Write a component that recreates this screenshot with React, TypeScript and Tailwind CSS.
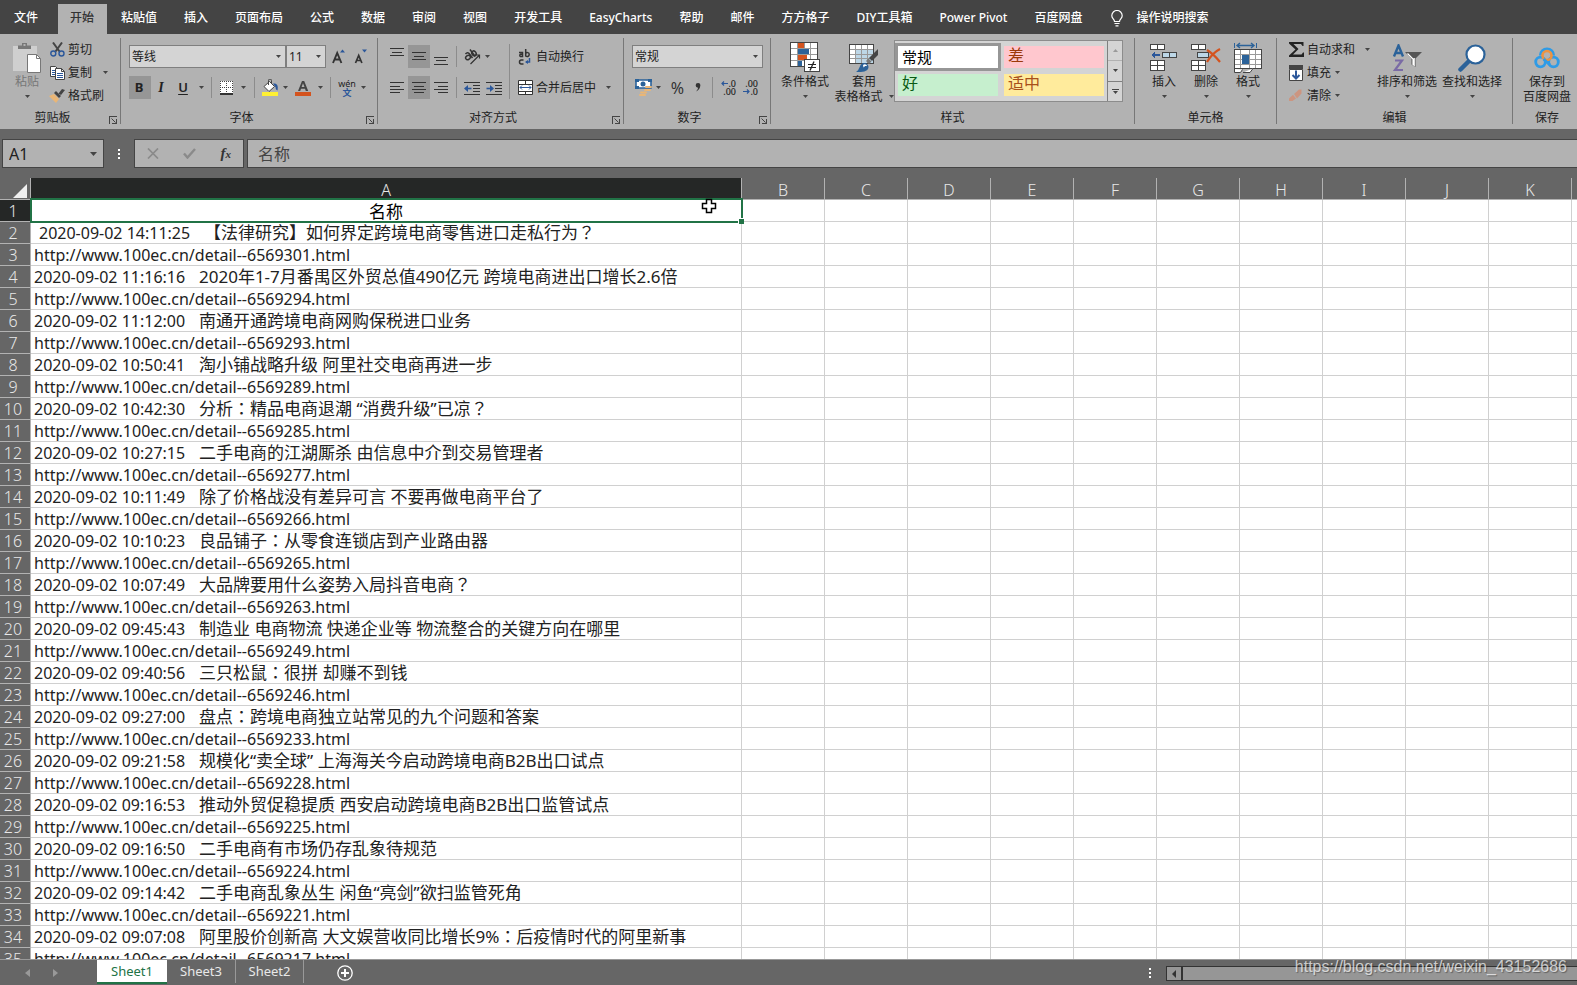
import React from "react";

const Caret = ({ className = "" }: { className?: string }) => (
  <svg width="5" height="3" viewBox="0 0 5 3" className={"shrink-0 " + className} aria-hidden="true">
    <path d="M0 0h5L2.5 3z" fill="#444" />
  </svg>
);

const Launcher = ({ label }: { label: string }) => (
  <button aria-label={label} className="mr-[3px] flex w-3 items-end justify-end">
    <svg width="8" height="8" viewBox="0 0 8 8" fill="none" stroke="#444" shapeRendering="crispEdges">
      <path d="M.5 8V.5H8" />
      <path d="M2.5 2.5l4 4" shapeRendering="auto" />
      <path d="M7.5 3v4.500H3" />
    </svg>
  </button>
);

type GroupProps = { title: string; width: string; launcher?: boolean; last?: boolean; children: React.ReactNode };

const Group = ({ title, width, launcher, last, children }: GroupProps) => (
  <section aria-label={title} className={"flex h-[86px] shrink-0 flex-col " + width + (last ? "" : " border-r border-[#777]")}>
    <div className="flex h-[72px]">{children}</div>
    <div className="flex h-[14px]">
      <div className="flex-1 text-center leading-[16px]">{title}</div>
      {launcher && <Launcher label={title + "设置"} />}
    </div>
  </section>
);

const Sep = ({ className = "" }: { className?: string }) => <span className={"h-[21px] w-px shrink-0 bg-[#8c8c8c] " + className} />;

const DropSlot = ({ label, className = "" }: { label: string; className?: string }) => (
  <button aria-label={label} className={"flex h-[23px] w-3 shrink-0 items-center justify-center " + className}>
    <Caret />
  </button>
);

const Combo = ({ label, value, width }: { label: string; value: string; width: string }) => (
  <label className={"flex h-[23px] shrink-0 items-center border border-[#7f7f7f] bg-[#d4d4d4] pr-1 pl-0.5 " + width}>
    <select aria-label={label} defaultValue={value} className="min-w-0 flex-1 appearance-none bg-transparent text-[12px] outline-none">
      <option>{value}</option>
    </select>
    <Caret />
  </label>
);

const Square = ({ label, active, children }: { label: string; active?: boolean; children: React.ReactNode }) => (
  <button aria-label={label} className={"flex h-[23px] w-[22px] shrink-0 items-center justify-center " + (active ? "bg-[#969696]" : "")}>
    {children}
  </button>
);

const SmallButton = ({ icon, text, caret }: { icon: React.ReactNode; text: string; caret?: string }) => (
  <button className="flex h-[23px] items-center whitespace-nowrap">
    <span className="mr-[3px] flex w-4 justify-center">{icon}</span>
    {text}
    {caret && <Caret className={caret} />}
  </button>
);

type BigProps = { icon: React.ReactNode; lines: string[]; width: string; inlineCaret?: boolean; muted?: boolean; noCaret?: boolean };

const BigButton = ({ icon, lines, width, inlineCaret, muted, noCaret }: BigProps) => (
  <button className={"flex shrink-0 flex-col items-center pt-[3px] " + width + (muted ? " text-[#777]" : "")}>
    <span className="flex h-[33px] items-center justify-center">{icon}</span>
    <span className="h-[15px] leading-[16px] whitespace-nowrap">{lines[0]}</span>
    <span className="flex h-[15px] items-center leading-[16px] whitespace-nowrap">
      {lines[1]}
      {!noCaret && <Caret className={inlineCaret ? "ml-[6px]" : ""} />}
    </span>
  </button>
);

/* ---------- icons ---------- */

const PasteIcon = () => (
  <svg width="30" height="32" viewBox="0 0 30 32">
    <path d="M1 4h24v25H1z" fill="#cfcfcf" />
    <path d="M6 7V3.500h4V1h5v2.500h4V7z" fill="#777" />
    <rect x="11.500" y="2" width="2" height="2" fill="#b2b2b2" />
    <path d="M15.500 12.500h9l4 4v14h-13z" fill="#fff" stroke="#777" />
    <path d="M24.500 12.500v4h4" fill="none" stroke="#777" />
  </svg>
);

const CutIcon = () => (
  <svg width="15" height="15" viewBox="0 0 15 15" fill="none">
    <path d="M3 .5l6.500 9M12 .5l-6.500 9" stroke="#444" strokeWidth="2" />
    <circle cx="3.300" cy="11.500" r="2.500" stroke="#2b579a" strokeWidth="1.400" />
    <circle cx="11.500" cy="11.500" r="2.500" stroke="#2b579a" strokeWidth="1.400" />
  </svg>
);

const CopyIcon = () => (
  <svg width="15" height="14" viewBox="0 0 15 14">
    <path d="M.5.5h5l2 2v8h-7z" fill="#fff" stroke="#444" />
    <path d="M2 4.500h3M2 6.500h3M2 8.500h3" stroke="#2b579a" />
    <path d="M5.500 2.500h6l3 3v8h-9z" fill="#fff" stroke="#444" />
    <path d="M11.500 2.500v3h3" fill="none" stroke="#444" />
    <path d="M7 7.500h6M7 9.500h6M7 11.500h6" stroke="#2b579a" />
  </svg>
);

const PainterIcon = () => (
  <svg width="16" height="14" viewBox="0 0 16 14">
    <path d="M0 7l5-2 5 5-3 4z" fill="#eab676" />
    <path d="M5 4l2-2 5 5-2 2z" fill="#444" />
    <path d="M9.500 4.500L13 0l3 1-4 5z" fill="#444" />
  </svg>
);

const BordersIcon = () => (
  <svg width="13" height="14" viewBox="0 0 13 14" shapeRendering="crispEdges">
    <path d="M0 0h13v13H0z" fill="#fff" />
    <path d="M0 .5h13M0 6.500h13M.5 0v13M6.500 0v13M12.500 0v13" stroke="#444" strokeDasharray="1 1" />
    <path d="M0 13h13" stroke="#333" strokeWidth="2" />
  </svg>
);

const FillIcon = () => (
  <svg width="17" height="17" viewBox="0 0 17 17">
    <path d="M2 7.500L7.500 2.500l5 5L7 12.500z" fill="#fff" stroke="#444" />
    <path d="M6.500 6V1.500a1.500 1.500 0 0 1 3 0V5" fill="none" stroke="#444" />
    <path d="M11 4.500c4-.5 5.500 2 4.500 7-1-.5-2-1-1.800-3z" fill="#2b579a" />
    <path d="M0 13h16v4H0z" fill="#fff033" />
  </svg>
);

const FontColorIcon = () => (
  <svg width="16" height="16" viewBox="0 0 16 16">
    <path d="M3 11L7 1h2.200l4 10h-2.400L10 8.700H6L5.200 11zM6.600 7h2.900L8 3.200z" fill="#444" fillRule="evenodd" />
    <path d="M0 12h16v4H0z" fill="#d4531e" />
  </svg>
);

const Lines = ({ rows }: { rows: number[][] }) => (
  <svg width="14" height="19" viewBox="0 0 14 19" shapeRendering="crispEdges" stroke="#333">
    {rows.map(([y, a, b]) => (
      <path key={y} d={`M${a} ${y + 0.5}H${b}`} />
    ))}
  </svg>
);

const IndentIcon = ({ right }: { right?: boolean }) => (
  <svg width="16" height="14" viewBox="0 0 16 14">
    <g stroke="#333" shapeRendering="crispEdges">
      <path d="M0 1.500h16M9 4.500h7M9 7.500h7M9 10.500h7M0 13.500h16" />
    </g>
    <g transform={right ? "matrix(-1 0 0 1 8 0)" : undefined}>
      <path d="M7.500 7.500H2" stroke="#2b579a" strokeWidth="1.600" />
      <path d="M0 7.500L4 4v7z" fill="#2b579a" />
    </g>
  </svg>
);

const OrientIcon = () => (
  <svg width="17" height="16" viewBox="0 0 17 16" fill="none" stroke="#333" strokeWidth="1.500">
    <path d="M1.500 5C3 3 4.500 3.500 5.500 5L8.500 9" />
    <ellipse cx="4" cy="8.500" rx="2.500" ry="2" transform="rotate(-35 4 8.500)" />
    <path d="M6 .5l5.200 7" />
    <ellipse cx="10" cy="4.300" rx="2" ry="2.500" transform="rotate(-35 10 4.300)" />
    <path d="M6.500 15L15.500 6M12 6h3.500v3.500" strokeWidth="1.200" />
  </svg>
);

const WrapIcon = () => (
  <svg width="14" height="16" viewBox="0 0 14 16" fill="none" stroke="#333" strokeWidth="1.500">
    <path d="M1 3.500h3.500V7.500H2.500A1.200 1.200 0 0 1 2.500 5.300H4.500M7.700 0v7.500M7.700 4.200c1-1 3.500-1 3.500 1.300s-2.500 2.500-3.500 1.500M5.500 11H3.200c-1 0-1.700.8-1.700 2s.7 2 1.700 2h2.300" />
    <path d="M11.500 9v4H8" stroke="#2b579a" />
    <path d="M7 13l3-2v4z" fill="#2b579a" stroke="none" />
  </svg>
);

const MergeIcon = () => (
  <svg width="15" height="15" viewBox="0 0 15 15">
    <path d="M.5.5h14v14H.5z" fill="#fff" stroke="#333" />
    <path d="M0 4h15M0 11h15M7.500 0v4M7.500 11v4" stroke="#333" shapeRendering="crispEdges" />
    <path d="M2 7.500h11M4 5.500l-2 2 2 2M11 5.500l2 2-2 2" stroke="#2b579a" fill="none" />
  </svg>
);

const CurrencyIcon = () => (
  <svg width="17" height="17" viewBox="0 0 17 17">
    <path d="M1 1h15v8H1z" fill="#fff" stroke="#2b6299" strokeWidth="1.600" />
    <path d="M0 0h4v3H0zM13 0h4v3h-4zM0 7h4v3H0z" fill="#2b6299" />
    <circle cx="8" cy="5" r="2.500" fill="#2b6299" />
    <g fill="#eab676">
      <rect x="10" y="7" width="7" height="2" rx="1" />
      <rect x="9" y="10" width="7" height="2" rx="1" />
      <rect x="5" y="12.500" width="7" height="2" rx="1" />
      <rect x="4" y="15" width="7" height="2" rx="1" />
    </g>
  </svg>
);

const ArrowLeft = () => (
  <svg width="7" height="5" viewBox="0 0 7 5">
    <path d="M7 2.500H1.500M3 .5l-2 2 2 2" stroke="#2b579a" strokeWidth="1.200" fill="none" />
  </svg>
);

const ArrowRight = () => (
  <svg width="7" height="5" viewBox="0 0 7 5">
    <path d="M0 2.500h5.500M4 .5l2 2-2 2" stroke="#2b579a" strokeWidth="1.200" fill="none" />
  </svg>
);

const DecimalButton = ({ label, more }: { label: string; more?: boolean }) => (
  <button aria-label={label} className="flex w-[22px] shrink-0 flex-col items-center text-[9px] leading-[8px] font-medium text-[#222]">
    <span className="flex w-4 items-center justify-end">
      {more && <ArrowLeft />}
      {more ? ".0" : ".00"}
    </span>
    <span className="flex w-4 items-center justify-end">
      {!more && <ArrowRight />}
      {more ? ".00" : ".0"}
    </span>
  </button>
);

const ConditionalIcon = () => (
  <svg width="31" height="31" viewBox="0 0 31 31" shapeRendering="crispEdges">
    <path d="M.5.5h27v24H.5z" fill="#fff" stroke="#444" />
    <path d="M1 6.500h26M1 12.500h26M1 18.500h26M7.500 1v23M14.500 1v23M20.500 1v23" stroke="#999" />
    <path d="M8 1h6v5H8zM8 13h9v5H8z" fill="#d4531e" />
    <path d="M8 7h11v5H8zM8 19h4v5H8z" fill="#2b6299" />
    <path d="M14.500 17.500h15v12h-15z" fill="#fff" stroke="#444" />
    <path d="M18 22.500h8M18 25.500h8" stroke="#222" />
    <path d="M24 19.500l-4 9" stroke="#222" strokeWidth="1.300" shapeRendering="auto" />
  </svg>
);

const TableFormatIcon = () => (
  <svg width="30" height="30" viewBox="0 0 30 30">
    <g shapeRendering="crispEdges">
      <path d="M.5 1.500h24v19H.5z" fill="#fff" stroke="#444" />
      <path d="M7 6h17v14H7z" fill="#bdd7e7" />
      <path d="M1 6.500h23M1 11.500h23M1 15.500h23M6.500 2v18M12.500 2v18M18.500 2v18" stroke="#999" />
    </g>
    <path d="M29 6v6l-6 6-3-3z" fill="#444" />
    <path d="M22.500 18.500l-3-3-2.500 2.500 3 3z" fill="#777" />
    <path d="M7 29c4-2 3-8 7.500-9 3-.5 5 1.500 5 4 0 4-5 5.500-12.500 5z" fill="#2b6299" />
    <path d="M14 22c1.500-1.500 4-.5 4 1.200-1.500-.8-2.500 0-3.500 1.300z" fill="#fff" />
  </svg>
);

const InsertIcon = () => (
  <svg width="28" height="29" viewBox="0 0 28 29" shapeRendering="crispEdges">
    <g fill="#fff" stroke="#444">
      <path d="M.5 1.500h14v5H.5zM7.500 1v6M.5 17.500h14v10H.5zM7.500 17v11M0 22.500h15" />
      <path d="M12.500 9.500h14v5h-14z" fill="#bdd7e7" />
      <path d="M19.500 9v6" />
    </g>
    <path d="M10 12H3" stroke="#2b579a" strokeWidth="2" />
    <path d="M1 12l4-3.500v7z" fill="#2b579a" />
  </svg>
);

const DeleteIcon = () => (
  <svg width="30" height="29" viewBox="0 0 30 29">
    <g fill="#fff" stroke="#444" shapeRendering="crispEdges">
      <path d="M.5 1.500h14v5H.5zM7.500 1v6M.5 17.500h14v10H.5zM7.500 17v11M0 22.500h15" />
      <path d="M6.500 9.500h11v5h-11z" fill="#bdd7e7" />
    </g>
    <path d="M16 7c5 3 9 7 13 12M29 6c-6 3-10 8-13 13" stroke="#d4531e" strokeWidth="2.200" fill="none" />
  </svg>
);

const FormatIcon = () => (
  <svg width="29" height="32" viewBox="0 0 29 32">
    <g shapeRendering="crispEdges">
      <path d="M.5 7.500h27v19H.500z" fill="#fff" stroke="#444" />
      <path d="M1 12.500h26M1 22.500h26M6.500 8v18M15.500 8v18M21.500 8v18M1 17.500h26" stroke="#999" />
      <path d="M8 13h7v9H8z" fill="#2b6299" />
      <path d="M.5 1v5M22.500 1v5" stroke="#2b6299" />
    </g>
    <path d="M3 3.500h17M6 1L3 3.500 6 6M17 1l3 2.500L17 6" stroke="#2b6299" strokeWidth="1.400" fill="none" />
    <path d="M.5 27v3.500h6l2-3M9 30.500h7l3-4" fill="#fff" stroke="#444" />
  </svg>
);

const SigmaIcon = () => (
  <svg width="15" height="15" viewBox="0 0 15 15">
    <path d="M0 0h14.500v4h-1L12 2H4.500l5 5-5.500 5.500h8.500l1.500-2h1V15H0v-1.500L6.500 7.500 0 1.500z" fill="#222" />
  </svg>
);

const FillDownIcon = () => (
  <svg width="14" height="16" viewBox="0 0 14 16">
    <path d="M.5 4.500h13v11H.5z" fill="#fff" stroke="#444" />
    <path d="M0 0h14v4H0z" fill="#444" />
    <path d="M7 5.500v8M3.500 10L7 13.500 10.500 10" stroke="#2b579a" strokeWidth="2" fill="none" />
  </svg>
);

const EraserIcon = () => (
  <svg width="14" height="13" viewBox="0 0 14 13">
    <path d="M5 5l5-4.500h2.500v4L8 9.500z" fill="#cc9580" />
    <path d="M4 5.800L0 9.500V12h3.500L7 9.500z" fill="#cc9580" />
  </svg>
);

const SortIcon = () => (
  <svg width="31" height="28" viewBox="0 0 31 28">
    <path d="M2 12.500L6.500 1.500l4.500 11M3.500 9h6" stroke="#2b6299" strokeWidth="2.400" fill="none" />
    <path d="M3 16.500h7L3 26h8" stroke="#7a6ba5" strokeWidth="2.200" fill="none" />
    <path d="M13 8h17l-6.500 6.500V23l-4-2.500v-6z" fill="#555" />
    <path d="M15.500 9.500l5.500 5.500v5.500l1.200.8V14" stroke="#fff" strokeWidth="1.200" fill="none" />
  </svg>
);

const FindIcon = () => (
  <svg width="28" height="28" viewBox="0 0 28 28">
    <path d="M10.500 17.500L2.500 25.500" stroke="#2b6299" strokeWidth="4.500" strokeLinecap="round" />
    <circle cx="17.500" cy="10.500" r="9" fill="#fff" stroke="#2b6299" strokeWidth="2.200" />
  </svg>
);

const CloudIcon = () => (
  <svg width="26" height="22" viewBox="0 0 26 22" fill="none" strokeWidth="2.800">
    <circle cx="6.500" cy="15" r="4.800" stroke="#2f9be6" />
    <circle cx="19.500" cy="15" r="4.800" stroke="#2f9be6" />
    <path d="M6.300 8.500a6.700 6.700 0 0 1 13.400 0" stroke="#2f9be6" />
    <circle cx="13" cy="8.500" r="4.500" stroke="#ee9340" strokeWidth="2.600" />
    <path d="M9.500 12l6.500 6" stroke="#2f9be6" />
  </svg>
);

/* ---------- data ---------- */

const tabs = [
  "粘贴值", "插入", "页面布局", "公式", "数据", "审阅", "视图", "开发工具", "EasyCharts",
  "帮助", "邮件", "方方格子", "DIY工具箱", "Power Pivot", "百度网盘",
];

const articles: [string, string, string][] = [
  ["14:11:25", "【法律研究】如何界定跨境电商零售进口走私行为？", "6569301"],
  ["11:16:16", "2020年1-7月番禺区外贸总值490亿元 跨境电商进出口增长2.6倍", "6569294"],
  ["11:12:00", "南通开通跨境电商网购保税进口业务", "6569293"],
  ["10:50:41", "淘小铺战略升级 阿里社交电商再进一步", "6569289"],
  ["10:42:30", "分析：精品电商退潮 “消费升级”已凉？", "6569285"],
  ["10:27:15", "二手电商的江湖厮杀 由信息中介到交易管理者", "6569277"],
  ["10:11:49", "除了价格战没有差异可言 不要再做电商平台了", "6569266"],
  ["10:10:23", "良品铺子：从零食连锁店到产业路由器", "6569265"],
  ["10:07:49", "大品牌要用什么姿势入局抖音电商？", "6569263"],
  ["09:45:43", "制造业 电商物流 快递企业等 物流整合的关键方向在哪里", "6569249"],
  ["09:40:56", "三只松鼠：很拼 却赚不到钱", "6569246"],
  ["09:27:00", "盘点：跨境电商独立站常见的九个问题和答案", "6569233"],
  ["09:21:58", "规模化“卖全球” 上海海关今启动跨境电商B2B出口试点", "6569228"],
  ["09:16:53", "推动外贸促稳提质 西安启动跨境电商B2B出口监管试点", "6569225"],
  ["09:16:50", "二手电商有市场仍存乱象待规范", "6569224"],
  ["09:14:42", "二手电商乱象丛生 闲鱼“亮剑”欲扫监管死角", "6569221"],
  ["09:07:08", "阿里股价创新高 大文娱营收同比增长9%：后疫情时代的阿里新事", "6569217"],
];

const columns = ["B", "C", "D", "E", "F", "G", "H", "I", "J", "K"];

/* Full-width punctuation sits in the middle of its cell in the TC face. */
const Title = ({ text }: { text: string }) => (
  <span>
    {text.split(/([：？])/).map((part, i) =>
      part === "：" || part === "？" ? (
        <span key={i} lang="zh-Hant" className="font-['Noto_Sans_CJK_TC',sans-serif] leading-none">
          {part}
        </span>
      ) : (
        part
      ),
    )}
  </span>
);

const Row = ({ n, children }: { n: number; children: React.ReactNode }) => (
  <tr className="h-[22px]">
    <th
      scope="row"
      className={
        "h-[22px] border-r border-b border-[#b2b2b2] p-0 pr-1 text-center text-[16px] font-light text-[#e8e8e8] " +
        (n === 1 ? "bg-[#252726]" : "bg-[#666]")
      }
    >
      <span className="block h-[21px] leading-[23px]">{n}</span>
    </th>
    {children}
    {columns.map((c) => (
      <td key={c} className="border-r border-b border-[#d0d0d0] p-0" />
    ))}
    <td className="border-b border-[#d0d0d0] p-0" />
  </tr>
);

const dataCell = "h-[22px] border-r border-b border-[#d0d0d0] py-0 pr-0 pl-[3px] text-[#222] whitespace-nowrap";

export default function App() {
  return (
    <div className="flex h-screen flex-col overflow-hidden bg-[#666] font-['Noto_Sans','Noto_Sans_CJK_SC',sans-serif] text-[12px] text-[#222]">
      {/* Ribbon tabs */}
      <nav className="flex h-[34px] shrink-0 items-stretch bg-[#444] pt-1 text-white">
        <button className="w-[58px] pb-[2px] pl-[14px] text-left font-medium">文件</button>
        <button className="bg-[#b2b2b2] pr-[13px] pb-[2px] pl-3 font-medium text-[#333]">开始</button>
        {tabs.map((t) => (
          <button key={t} className="pr-[13px] pb-[2px] pl-[14px] font-medium whitespace-nowrap">
            {t}
          </button>
        ))}
        <button className="flex items-center gap-[13px] pb-[2px] pl-4 font-medium whitespace-nowrap">
          <svg width="12" height="17" viewBox="0 0 12 17" fill="none" stroke="#fff" strokeWidth="1.200">
            <path d="M3.500 11.500C3.500 9 .8 8.500.8 5.700a5.200 5.200 0 0 1 10.400 0c0 2.800-2.700 3.300-2.700 5.800zM3.500 13.500h5M4.500 15.800h3" />
          </svg>
          操作说明搜索
        </button>
      </nav>

      {/* Ribbon */}
      <div className="flex h-[95px] shrink-0 overflow-hidden bg-[#b2b2b2] pt-1">
        <Group title="剪贴板" width="w-[121px]" launcher>
          <div className="flex pl-[6px]">
            <BigButton icon={<PasteIcon />} lines={["粘贴"]} width="w-[42px]" muted />
          </div>
          <div className="flex flex-col pl-px">
            <SmallButton icon={<CutIcon />} text="剪切" />
            <SmallButton icon={<CopyIcon />} text="复制" caret="ml-[11px]" />
            <SmallButton icon={<PainterIcon />} text="格式刷" />
          </div>
        </Group>

        <Group title="字体" width="w-[257px]" launcher>
          <div className="flex flex-col gap-2 pt-[7px] pl-2">
            <div className="flex items-center">
              <Combo label="字体" value="等线" width="w-[157px]" />
              <Combo label="字号" value="11" width="w-[40px]" />
              <button aria-label="增大字号" className="ml-[6px] flex w-[15px]">
                <svg width="14" height="16" viewBox="0 0 14 16">
                  <path d="M1 14L5.200 4 9.400 14M2.500 10.500h5.400" stroke="#333" strokeWidth="1.900" fill="none" />
                  <path d="M8 3.500h5L10.500.5z" fill="#2b579a" />
                </svg>
              </button>
              <button aria-label="减小字号" className="ml-[7px] flex w-[15px]">
                <svg width="14" height="16" viewBox="0 0 14 16">
                  <path d="M1.500 14L4.700 6.500 7.900 14M2.500 11.500h4.400" stroke="#333" strokeWidth="1.700" fill="none" />
                  <path d="M8 .5h5L10.500 3.500z" fill="#2b579a" />
                </svg>
              </button>
            </div>
            <div className="flex items-center">
              <Square label="加粗" active><b className="pr-[2px] text-[13px]">B</b></Square>
              <Square label="倾斜"><i className="pr-[2px] font-['Liberation_Serif',serif] text-[14px] font-bold">I</i></Square>
              <Square label="下划线"><span className="pr-[2px] text-[13px] font-semibold underline underline-offset-2">U</span></Square>
              <DropSlot label="下划线样式" />
              <Sep className="ml-1 mr-2" />
              <button aria-label="边框" className="flex"><BordersIcon /></button>
              <DropSlot label="边框选项" className="ml-1" />
              <Sep className="ml-[5px] mr-[7px]" />
              <button aria-label="填充颜色" className="flex"><FillIcon /></button>
              <DropSlot label="填充颜色选项" />
              <button aria-label="字体颜色" className="ml-1 flex"><FontColorIcon /></button>
              <DropSlot label="字体颜色选项" className="ml-[3px]" />
              <Sep className="ml-1 mr-2" />
              <button aria-label="拼音" className="flex w-4 flex-col items-center leading-[9px] text-[#222]">
                <span className="text-[9px]">wén</span>
                <span className="text-[9px] font-bold text-[#2b579a]">文</span>
              </button>
              <DropSlot label="拼音选项" className="ml-[2px]" />
            </div>
          </div>
        </Group>

        <Group title="对齐方式" width="w-[246px]" launcher>
          <div className="flex w-[131px] flex-col gap-2 pt-[7px] pl-2">
            <div className="flex items-center">
              <Square label="顶端对齐"><Lines rows={[[1, 0, 14], [5, 2, 12], [8, 0, 14]]} /></Square>
              <Square label="垂直居中" active><Lines rows={[[5, 0, 14], [9, 2, 12], [12, 0, 14]]} /></Square>
              <Square label="底端对齐"><Lines rows={[[10, 0, 14], [13, 2, 12], [17, 0, 14]]} /></Square>
              <Sep className="ml-1 mr-[7px]" />
              <button aria-label="方向" className="flex"><OrientIcon /></button>
              <DropSlot label="方向选项" />
            </div>
            <div className="flex items-center">
              <Square label="左对齐"><Lines rows={[[4, 0, 14], [8, 0, 10], [11, 0, 14], [14, 0, 10]]} /></Square>
              <Square label="居中" active><Lines rows={[[4, 0, 14], [8, 2, 12], [11, 0, 14], [14, 2, 12]]} /></Square>
              <Square label="右对齐"><Lines rows={[[4, 0, 14], [8, 4, 14], [11, 0, 14], [14, 4, 14]]} /></Square>
              <Sep className="ml-1 mr-[7px]" />
              <button aria-label="减少缩进量" className="flex"><IndentIcon /></button>
              <button aria-label="增加缩进量" className="ml-[6px] flex"><IndentIcon right /></button>
            </div>
          </div>
          <span className="mt-[6px] h-[55px] w-px bg-[#8c8c8c]" />
          <div className="flex flex-col gap-2 pt-[7px] pl-[7px]">
            <SmallButton icon={<WrapIcon />} text="自动换行" />
            <SmallButton icon={<MergeIcon />} text="合并后居中" caret="ml-[10px]" />
          </div>
        </Group>

        <Group title="数字" width="w-[147px]" launcher>
          <div className="flex flex-col gap-2 pt-[7px] pl-2">
            <Combo label="数字格式" value="常规" width="w-[131px]" />
            <div className="flex h-[23px] items-center">
              <button aria-label="会计数字格式" className="ml-[3px] flex"><CurrencyIcon /></button>
              <DropSlot label="会计数字格式选项" />
              <button className="ml-[6px] w-[15px] text-[16px] leading-5 text-[#333]">%</button>
              <button aria-label="千位分隔样式" className="ml-[10px] flex w-[7px]">
                <svg width="6" height="9" viewBox="0 0 6 9">
                  <path d="M3 0a2.300 2.300 0 0 1 2.300 2.700C5 5.500 3.500 7.500 1 8.500 2.300 7 3 6 3 4.700A2.300 2.300 0 0 1 3 0z" fill="#333" />
                </svg>
              </button>
              <Sep className="ml-[10px] mr-1" />
              <DecimalButton label="增加小数位数" more />
              <DecimalButton label="减少小数位数" />
            </div>
          </div>
        </Group>

        <Group title="样式" width="w-[364px]">
          <div className="flex pl-[5px]">
            <BigButton icon={<ConditionalIcon />} lines={["条件格式"]} width="w-[58px]" />
            <BigButton icon={<TableFormatIcon />} lines={["套用", "表格格式"]} width="w-[60px]" inlineCaret />
          </div>
          <div className="mt-[2px] flex h-[62px] border border-[#8c8c8c] bg-[#d4d4d4]">
            <div className="grid grid-cols-[106px_100px] content-start gap-x-[3px] pt-[2px] text-[16px] leading-[19px]">
              <button className="h-7 border-[3px] border-[#969696] bg-white pl-1 text-left text-[15px] text-black">常规</button>
              <button className="mt-[3px] flex h-[22px] items-start bg-[#ffc7ce] pl-1 text-[#9c3a0a]">差</button>
              <button className="mx-[3px] mt-[3px] flex h-[22px] items-start bg-[#c6efce] pl-1 text-[#0a5a14]">好</button>
              <button className="mt-[3px] flex h-[22px] items-start bg-[#ffeb9c] pl-1 text-[#a8501a]">适中</button>
            </div>
            <div className="ml-[3px] flex w-[15px] flex-col divide-y divide-[#7f7f7f] border-l border-[#7f7f7f]">
              <button aria-label="上一行" className="flex flex-1 items-center justify-center opacity-40"><Caret className="rotate-180" /></button>
              <button aria-label="下一行" className="flex flex-1 items-center justify-center"><Caret /></button>
              <button aria-label="其他样式" className="flex flex-1 flex-col items-center justify-center gap-px">
                <span className="h-px w-[7px] bg-[#444]" />
                <Caret />
              </button>
            </div>
          </div>
        </Group>

        <Group title="单元格" width="w-[142px]">
          <div className="flex pl-2">
            <BigButton icon={<InsertIcon />} lines={["插入"]} width="w-[42px]" />
            <BigButton icon={<DeleteIcon />} lines={["删除"]} width="w-[42px]" />
            <BigButton icon={<FormatIcon />} lines={["格式"]} width="w-[42px]" />
          </div>
        </Group>

        <Group title="编辑" width="w-[236px]">
          <div className="flex w-[97px] flex-col pl-[11px]">
            <SmallButton icon={<SigmaIcon />} text="自动求和" caret="ml-[10px]" />
            <SmallButton icon={<FillDownIcon />} text="填充" caret="ml-1" />
            <SmallButton icon={<EraserIcon />} text="清除" caret="ml-1" />
          </div>
          <BigButton icon={<SortIcon />} lines={["排序和筛选"]} width="w-[66px]" />
          <BigButton icon={<FindIcon />} lines={["查找和选择"]} width="w-16" />
        </Group>

        <Group title="保存" width="w-[68px]" last>
          <BigButton icon={<CloudIcon />} lines={["保存到", "百度网盘"]} width="w-[68px]" noCaret />
        </Group>
      </div>

      {/* Formula bar */}
      <div className="flex h-[49px] shrink-0 py-[10px] pl-[2px]">
        <div className="flex w-[102px] shrink-0 items-center border border-[#444] bg-[#b2b2b2] pr-[6px] pl-[6px]">
          <input aria-label="名称框" defaultValue="A1" className="w-full min-w-0 bg-transparent text-[16px] outline-none" />
          <svg width="7" height="4" viewBox="0 0 7 4" className="shrink-0"><path d="M0 0h7L3.500 4z" fill="#444" /></svg>
        </div>
        <div className="flex w-[30px] shrink-0 flex-col items-center justify-center gap-[2px]">
          <span className="h-[2px] w-[2px] bg-white" />
          <span className="h-[2px] w-[2px] bg-white" />
          <span className="h-[2px] w-[2px] bg-white" />
        </div>
        <div className="flex w-[110px] shrink-0 items-center justify-around border border-[#444] bg-[#b2b2b2]">
          <button aria-label="取消">
            <svg width="12" height="11" viewBox="0 0 12 11"><path d="M1 .5l10 10M11 .5l-10 10" stroke="#8a8a8a" strokeWidth="1.700" /></svg>
          </button>
          <button aria-label="输入">
            <svg width="13" height="11" viewBox="0 0 13 11"><path d="M1 5.500l3.500 4L12 1" fill="none" stroke="#8a8a8a" strokeWidth="2.400" /></svg>
          </button>
          <button aria-label="插入函数" className="font-['Liberation_Serif',serif] text-[15px] leading-4 font-bold text-[#333] italic">
            f<span className="text-[11px]">x</span>
          </button>
        </div>
        <input
          aria-label="编辑栏"
          defaultValue="名称"
          className="ml-[3px] min-w-0 flex-1 border border-r-0 border-[#444] bg-[#b2b2b2] pl-[10px] text-[16px] text-[#444] outline-none"
        />
      </div>

      {/* Worksheet */}
      <main className="min-h-0 flex-1 overflow-hidden bg-white">
        <table className="w-full table-fixed border-separate border-spacing-0">
          <colgroup>
            <col className="w-[31px]" />
            <col className="w-[711px]" />
            {columns.map((c) => (
              <col key={c} className="w-[83px]" />
            ))}
            <col />
          </colgroup>
          <thead>
            <tr className="h-[22px] bg-[#666] text-[16px] leading-[18px] text-[#e8e8e8]">
              <td className="border-r border-b border-[#b2b2b2] p-0">
                <svg width="14" height="14" viewBox="0 0 14 14" className="mt-1 ml-[13px] block"><path d="M14 0v14H0z" fill="#f0f0f0" /></svg>
              </td>
              <th scope="col" className="border-r border-b border-[#b2b2b2] bg-[#252726] p-0 pt-[3px] font-light">A</th>
              {columns.map((c) => (
                <th key={c} scope="col" className="border-r border-b border-[#b2b2b2] p-0 pt-[3px] font-light">{c}</th>
              ))}
              <td className="border-b border-[#b2b2b2] p-0" />
            </tr>
          </thead>
          <tbody>
            <Row n={1}>
              <td className="relative border-r border-b border-[#d0d0d0] p-0 text-center text-[17px] leading-[23px] text-black">
                <span className="block h-[21px]">名称</span>
                <span className="absolute -top-[2px] -right-[2px] -bottom-[2px] -left-px border-2 border-[#217346]" />
                <span className="absolute -right-[3px] -bottom-[3px] h-[6px] w-[6px] border-t border-l border-white bg-[#217346]" />
                <svg width="16" height="16" viewBox="0 0 16 16" className="absolute -top-[2px] right-6">
                  <path d="M5.500 1.500h5v4h4v5h-4v4h-5v-4h-4v-5h4z" fill="#fff" stroke="#000" strokeWidth="1.500" />
                </svg>
              </td>
            </Row>
            {articles.map(([time, title, id], i) => (
              <React.Fragment key={id}>
                <Row n={2 * i + 2}>
                  <td className={dataCell}>
                    <span className={"flex h-[21px] items-baseline text-[17px] leading-[21px] " + (i === 0 ? "pl-[5px]" : "")}>
                      <span className="w-[165px] shrink-0 text-[16px]">2020-09-02 {time}</span>
                      <Title text={title} />
                    </span>
                  </td>
                </Row>
                <Row n={2 * i + 3}>
                  <td className={dataCell}>
                    <span className="block h-[21px] text-[16px] leading-[23px]">http://www.100ec.cn/detail--{id}.html</span>
                  </td>
                </Row>
              </React.Fragment>
            ))}
          </tbody>
        </table>
      </main>

      {/* Sheet tabs */}
      <footer className="relative flex h-[26px] shrink-0 border-t border-[#999] text-[13px] text-[#e8e8e8]">
        <div className="flex w-[97px] shrink-0 items-center gap-[23px] pl-[25px]">
          <button aria-label="上一张工作表"><svg width="5" height="8" viewBox="0 0 5 8"><path d="M5 0v8L0 4z" fill="#999" /></svg></button>
          <button aria-label="下一张工作表"><svg width="5" height="8" viewBox="0 0 5 8"><path d="M0 0v8l5-4z" fill="#999" /></svg></button>
        </div>
        <button className="h-6 w-[70px] border-b-2 border-[#217346] bg-white leading-[22px] text-[#217346]">Sheet1</button>
        <button className="flex h-[23px] w-[69px] items-start justify-center border-r border-[#999] leading-[22px]">Sheet3</button>
        <button className="flex h-[23px] w-[68px] items-start justify-center border-r border-[#999] leading-[22px]">Sheet2</button>
        <button aria-label="新工作表" className="ml-[33px] flex items-center">
          <svg width="16" height="16" viewBox="0 0 16 16" fill="none" stroke="#fff">
            <circle cx="8" cy="8" r="7.200" strokeWidth="1.300" />
            <path d="M8 4v8M4 8h8" strokeWidth="2" />
          </svg>
        </button>
        <div className="flex-1" />
        <div className="flex w-[32px] shrink-0 flex-col items-center justify-center gap-[2px]">
          <span className="h-[2px] w-[2px] bg-white" />
          <span className="h-[2px] w-[2px] bg-white" />
          <span className="h-[2px] w-[2px] bg-white" />
        </div>
        <div className="mt-[6px] flex h-[15px] w-[411px] shrink-0 border border-r-0 border-[#333] bg-[#969696]">
          <button aria-label="向左滚动" className="flex w-4 items-center justify-center border-r-2 border-[#333]">
            <svg width="4" height="8" viewBox="0 0 4 8"><path d="M4 0v8L0 4z" fill="#333" /></svg>
          </button>
        </div>
        <span className="absolute right-[10px] bottom-[5px] font-['Liberation_Sans',sans-serif] text-[16px] leading-[26px] text-white/70 [text-shadow:1px_1px_1px_rgba(0,0,0,0.35)]">
          https://blog.csdn.net/weixin_43152686
        </span>
      </footer>
    </div>
  );
}
